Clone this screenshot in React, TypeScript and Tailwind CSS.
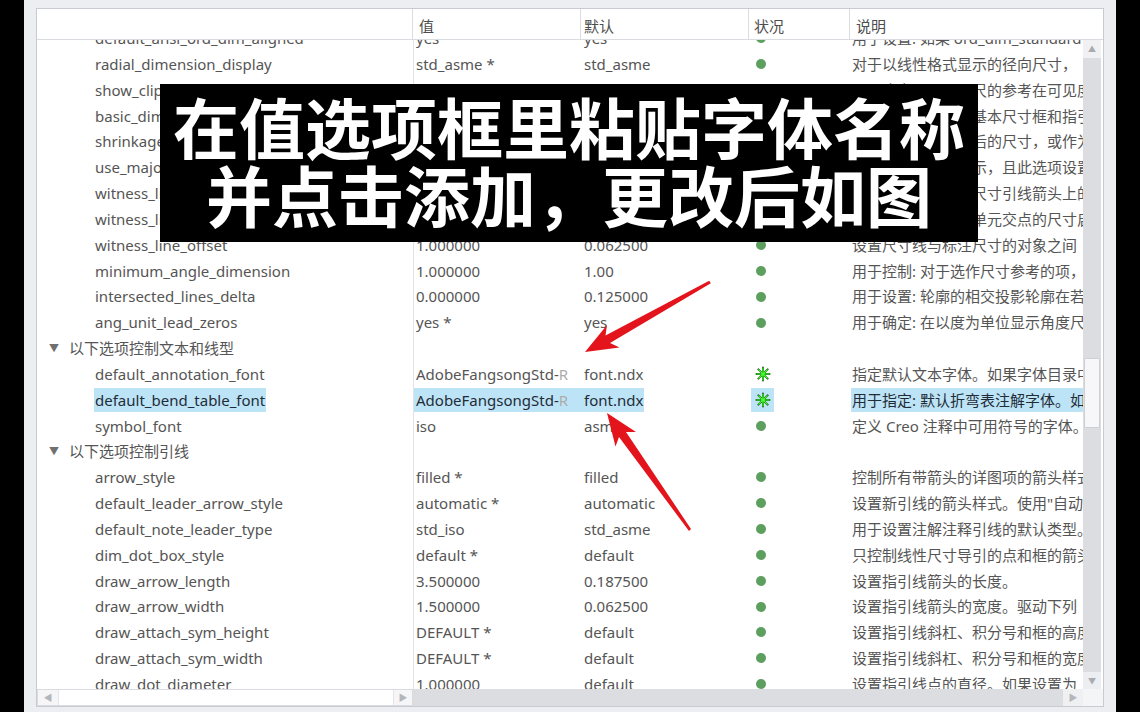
import React from "react";

type Item =
  | { t: "item"; name: string; value: string; def: string; status: "dot" | "star"; desc: string; sel?: boolean; fade?: boolean }
  | { t: "group"; label: string };

const rows: Item[] = [
  { t: "item", name: "default_ansi_ord_dim_aligned", value: "yes", def: "yes", status: "dot", desc: "用于设置: 如果 ord_dim_standard" },
  { t: "item", name: "radial_dimension_display", value: "std_asme *", def: "std_asme", status: "dot", desc: "对于以线性格式显示的径向尺寸，" },
  { t: "item", name: "show_clipped_dimensions", value: "no *", def: "no", status: "dot", desc: "用于确定是否显示尺的参考在可见度在" },
  { t: "item", name: "basic_dim_box_style", value: "default *", def: "default", status: "dot", desc: "用于控制是否显示基本尺寸框和指引线" },
  { t: "item", name: "shrinkage_value_display", value: "percent_shrink", def: "percent", status: "dot", desc: "用于设置显示收缩后的尺寸，或作为" },
  { t: "item", name: "use_major_units", value: "no *", def: "no", status: "dot", desc: "用于控制主单位显示，且此选项设置" },
  { t: "item", name: "witness_line_delta", value: "0.125000", def: "0.125000", status: "dot", desc: "用于设置要显示在尺寸引线箭头上的" },
  { t: "item", name: "witness_line_extension", value: "no *", def: "no", status: "dot", desc: "用于设置对与边界单元交点的尺寸启" },
  { t: "item", name: "witness_line_offset", value: "1.000000", def: "0.062500", status: "dot", desc: "设置尺寸线与标注尺寸的对象之间" },
  { t: "item", name: "minimum_angle_dimension", value: "1.000000", def: "1.00", status: "dot", desc: "用于控制: 对于选作尺寸参考的项，" },
  { t: "item", name: "intersected_lines_delta", value: "0.000000", def: "0.125000", status: "dot", desc: "用于设置: 轮廓的相交投影轮廓在若" },
  { t: "item", name: "ang_unit_lead_zeros", value: "yes *", def: "yes", status: "dot", desc: "用于确定: 在以度为单位显示角度尺寸" },
  { t: "group", label: "以下选项控制文本和线型" },
  { t: "item", name: "default_annotation_font", value: "AdobeFangsongStd-", def: "font.ndx", status: "star", desc: "指定默认文本字体。如果字体目录中", fade: true },
  { t: "item", name: "default_bend_table_font", value: "AdobeFangsongStd-", def: "font.ndx", status: "star", desc: "用于指定: 默认折弯表注解字体。如", fade: true, sel: true },
  { t: "item", name: "symbol_font", value: "iso", def: "asme", status: "dot", desc: "定义 Creo 注释中可用符号的字体。" },
  { t: "group", label: "以下选项控制引线" },
  { t: "item", name: "arrow_style", value: "filled *", def: "filled", status: "dot", desc: "控制所有带箭头的详图项的箭头样式" },
  { t: "item", name: "default_leader_arrow_style", value: "automatic *", def: "automatic", status: "dot", desc: "设置新引线的箭头样式。使用\"自动\"" },
  { t: "item", name: "default_note_leader_type", value: "std_iso", def: "std_asme", status: "dot", desc: "用于设置注解注释引线的默认类型。" },
  { t: "item", name: "dim_dot_box_style", value: "default *", def: "default", status: "dot", desc: "只控制线性尺寸导引的点和框的箭头" },
  { t: "item", name: "draw_arrow_length", value: "3.500000", def: "0.187500", status: "dot", desc: "设置指引线箭头的长度。" },
  { t: "item", name: "draw_arrow_width", value: "1.500000", def: "0.062500", status: "dot", desc: "设置指引线箭头的宽度。驱动下列" },
  { t: "item", name: "draw_attach_sym_height", value: "DEFAULT *", def: "default", status: "dot", desc: "设置指引线斜杠、积分号和框的高度" },
  { t: "item", name: "draw_attach_sym_width", value: "DEFAULT *", def: "default", status: "dot", desc: "设置指引线斜杠、积分号和框的宽度" },
  { t: "item", name: "draw_dot_diameter", value: "1.000000", def: "default", status: "dot", desc: "设置指引线点的直径。如果设置为" },
];

function Star() {
  return (
    <svg width="16" height="16" viewBox="0 0 16 16">
      <g stroke="#1d5a1d" strokeWidth="2" strokeLinecap="round">
        <line x1="8" y1="1.5" x2="8" y2="14.5" />
        <line x1="1.5" y1="8" x2="14.5" y2="8" />
        <line x1="3.4" y1="3.4" x2="12.6" y2="12.6" />
        <line x1="12.6" y1="3.4" x2="3.4" y2="12.6" />
      </g>
      <g stroke="#43ff2a" strokeWidth="1.2" strokeLinecap="round">
        <line x1="8" y1="2" x2="8" y2="14" />
        <line x1="2" y1="8" x2="14" y2="8" />
        <line x1="3.8" y1="3.8" x2="12.2" y2="12.2" />
        <line x1="12.2" y1="3.8" x2="3.8" y2="12.2" />
      </g>
      <circle cx="8" cy="8" r="1.8" fill="#43ff2a" />
    </svg>
  );
}

function Dot() {
  return <div className="w-[10px] h-[10px] rounded-full bg-[#5c9f5e]" />;
}

function Row({ r }: { r: Item }) {
  if (r.t === "group") {
    return (
      <div className="flex h-[25.83px] items-center">
        <div className="w-[377px] h-full border-r border-[#e3e3e3] flex items-center pl-[12px] text-[#555555]">
          <span className="text-[10px] text-[#707070] w-[20px]">▼</span>
          <span>{r.label}</span>
        </div>
      </div>
    );
  }
  const sel = !!r.sel;
  const tc = sel ? "text-[#1f2c38]" : "text-[#555555]";
  return (
    <div className={`flex h-[25.83px] items-center ${tc}`}>
      <div className="w-[377px] h-full border-r border-[#e3e3e3] flex items-center pl-[57px] whitespace-nowrap overflow-hidden">
        <span className={`px-[1px] h-[24px] flex items-center ${sel ? "bg-[#bde4f6]" : ""}`}>{r.name}</span>
      </div>
      <div className={`w-[167px] h-[24px] flex items-center pl-[2px] whitespace-nowrap overflow-hidden ${sel ? "bg-[#bde4f6]" : ""}`}>
        {r.value}
        {r.fade && <span className="text-[#acacac]">R</span>}
      </div>
      <div className="w-[168px] h-full flex items-center whitespace-nowrap overflow-hidden">
        <span className={`h-[24px] flex items-center pl-[3px] pr-[1px] ${sel ? "bg-[#bde4f6]" : ""}`}>{r.def}</span>
      </div>
      <div className="w-[101px] h-full flex items-center pl-[2px]">
        <div className={`w-[23px] h-[24px] flex items-center ${r.status === "star" ? "justify-center" : "pl-[5px]"} ${sel ? "bg-[#bde4f6]" : ""}`}>
          {r.status === "star" ? <Star /> : <Dot />}
        </div>
      </div>
      <div className="w-[233px] h-full flex items-center pl-[1px]">
        <div className={`w-full h-[24px] flex items-center pl-[1px] whitespace-nowrap overflow-hidden ${sel ? "bg-[#bde4f6]" : ""}`}>{r.desc}</div>
      </div>
    </div>
  );
}

export default function App() {
  return (
    <div className="w-[1140px] h-[712px] bg-black relative overflow-hidden font-['Noto_Sans','Noto_Sans_CJK_SC',sans-serif] text-[15px]">
      <div className="ml-[24px] w-[1092px] h-full bg-[#eceef2] pt-[8px] pl-[12px]">
        <div className="w-[1068px] h-[699px] border border-[#c8ccd2] bg-white flex flex-col">
          {/* header */}
          <div className="h-[31px] flex border-b border-[#d9dbe0] text-[#4d4d4d] shrink-0">
            <div className="w-[376px] border-r border-[#dcdcdc]" />
            <div className="w-[168px] border-r border-[#dcdcdc] pl-[6px] pt-[5px] flex items-center">值</div>
            <div className="w-[168px] border-r border-[#dcdcdc] pl-[3px] pt-[5px] flex items-center">默认</div>
            <div className="w-[101px] border-r border-[#dcdcdc] pl-[5px] pt-[5px] flex items-center">状况</div>
            <div className="flex-1 pl-[6px] pt-[5px] flex items-center">说明</div>
          </div>
          {/* body */}
          <div className="flex h-[649px] shrink-0">
            <div className="w-[1046px] h-full overflow-hidden">
              <div className="mt-[-14.5px]">
                {rows.map((r, i) => (
                  <Row key={i} r={r} />
                ))}
              </div>
            </div>
            {/* vertical scrollbar */}
            <div className="w-[20px] h-full flex pr-[2px]">
              <div className="w-[18px] h-full bg-[#dcdde0] flex flex-col">
                <div className="h-[18px] bg-[#f1f1f3] flex items-center justify-center text-[8px] text-[#a9abb0]">▲</div>
                <div className="h-[300px]" />
                <div className="h-[70px] mx-[1px] bg-[#f7f7fa] border border-[#cfd0d4]" />
                <div className="flex-1" />
                <div className="h-[17px] bg-[#eceef1] flex items-center justify-center text-[8px] text-[#a9abb0]">▼</div>
              </div>
            </div>
          </div>
          {/* horizontal scrollbars */}
          <div className="flex h-[17px] shrink-0">
            <div className="w-[376px] h-full flex border border-[#dadbe0] bg-[#f6f6f8]">
              <div className="w-[20px] flex items-center justify-center text-[9px] text-[#b4b6bb]">◀</div>
              <div className="flex-1 bg-white border-x border-[#e4e5e8]" />
              <div className="w-[18px] flex items-center justify-center text-[9px] text-[#b4b6bb]">▶</div>
            </div>
            <div className="w-[670px] h-full flex bg-[#dcdde0]">
              <div className="flex-1" />
              <div className="w-[20px] bg-[#eef0f2] flex items-center justify-center text-[9px] text-[#b4b6bb]">▶</div>
            </div>
            <div className="w-[20px] h-full bg-[#f4f5f7]" />
          </div>
        </div>
      </div>

      {/* overlay caption */}
      <div className="absolute left-[160px] top-[84px] w-[818px] h-[158px] bg-black text-white text-center font-['Noto_Sans_CJK_SC',sans-serif] font-bold text-[66px] leading-[68px] pt-[7px]">
        <div>在值选项框里粘贴字体名称</div>
        <div>并点击添加，更改后如图</div>
      </div>

      {/* red arrows */}
      <svg className="absolute left-0 top-0 pointer-events-none" width="1140" height="712" viewBox="0 0 1140 712">
        <polygon
          fill="#e3141b"
          points="585,352 619.5,347.5 610,343 710.8,283.2 709.2,280.8 605.5,335.5 607,325"
        />
        <polygon
          fill="#e3141b"
          points="607,413 636,432 626,432 691,529 689,531 619,437 615.5,446.5"
        />
      </svg>
    </div>
  );
}
